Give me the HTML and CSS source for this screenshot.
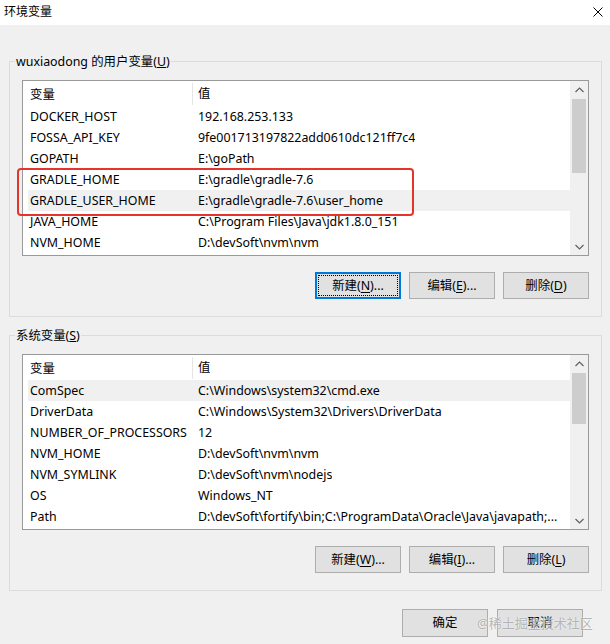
FILE: index.html
```html
<!DOCTYPE html>
<html lang="zh-CN">
<head>
<meta charset="utf-8">
<title>环境变量</title>
<link rel="stylesheet" href="styles.css">
</head>
<body>
<div class="window">
  <div class="titlebar">
    <span class="title">环境变量</span>
    <svg class="close" width="10" height="10" viewBox="0 0 10 10"><path d="M0.5 0.5 L9.5 9.5 M9.5 0.5 L0.5 9.5" stroke="#000" stroke-width="1" fill="none"/></svg>
  </div>
  <div class="content">
    <fieldset class="group">
      <legend>wuxiaodong 的用户变量(<u>U</u>)</legend>
      <div class="group-inner">
        <div class="list">
          <div class="list-main">
            <div class="row head"><span class="c1">变量</span><span class="c2">值</span></div>
            <div class="row"><span class="c1">DOCKER_HOST</span><span class="c2">192.168.253.133</span></div>
            <div class="row"><span class="c1">FOSSA_API_KEY</span><span class="c2">9fe001713197822add0610dc121ff7c4</span></div>
            <div class="row"><span class="c1">GOPATH</span><span class="c2">E:\goPath</span></div>
            <div class="row"><span class="c1">GRADLE_HOME</span><span class="c2">E:\gradle\gradle-7.6</span></div>
            <div class="row hover"><span class="c1">GRADLE_USER_HOME</span><span class="c2">E:\gradle\gradle-7.6\user_home</span></div>
            <div class="row"><span class="c1">JAVA_HOME</span><span class="c2">C:\Program Files\Java\jdk1.8.0_151</span></div>
            <div class="row"><span class="c1">NVM_HOME</span><span class="c2">D:\devSoft\nvm\nvm</span></div>
          </div>
          <div class="scrollbar">
            <div class="arrow"><svg width="9" height="6" viewBox="0 0 9 6"><path d="M0.5 5 L4.5 1 L8.5 5" stroke="#606060" stroke-width="1.2" fill="none"/></svg></div>
            <div class="track"><div class="thumb thumb-user"></div></div>
            <div class="arrow"><svg width="9" height="6" viewBox="0 0 9 6"><path d="M0.5 1 L4.5 5 L8.5 1" stroke="#606060" stroke-width="1.2" fill="none"/></svg></div>
          </div>
          <div class="callout"></div>
        </div>
        <div class="buttons">
          <button class="btn focused">新建(<u>N</u>)...</button>
          <button class="btn">编辑(<u>E</u>)...</button>
          <button class="btn">删除(<u>D</u>)</button>
        </div>
      </div>
    </fieldset>

    <fieldset class="group group-sys">
      <legend>系统变量(<u>S</u>)</legend>
      <div class="group-inner">
        <div class="list">
          <div class="list-main">
            <div class="row head"><span class="c1">变量</span><span class="c2">值</span></div>
            <div class="row hover"><span class="c1">ComSpec</span><span class="c2">C:\Windows\system32\cmd.exe</span></div>
            <div class="row"><span class="c1">DriverData</span><span class="c2">C:\Windows\System32\Drivers\DriverData</span></div>
            <div class="row"><span class="c1">NUMBER_OF_PROCESSORS</span><span class="c2">12</span></div>
            <div class="row"><span class="c1">NVM_HOME</span><span class="c2">D:\devSoft\nvm\nvm</span></div>
            <div class="row"><span class="c1">NVM_SYMLINK</span><span class="c2">D:\devSoft\nvm\nodejs</span></div>
            <div class="row"><span class="c1">OS</span><span class="c2">Windows_NT</span></div>
            <div class="row"><span class="c1">Path</span><span class="c2">D:\devSoft\fortify\bin;C:\ProgramData\Oracle\Java\javapath;...</span></div>
          </div>
          <div class="scrollbar">
            <div class="arrow"><svg width="9" height="6" viewBox="0 0 9 6"><path d="M0.5 5 L4.5 1 L8.5 5" stroke="#606060" stroke-width="1.2" fill="none"/></svg></div>
            <div class="track"><div class="thumb thumb-sys"></div></div>
            <div class="arrow"><svg width="9" height="6" viewBox="0 0 9 6"><path d="M0.5 1 L4.5 5 L8.5 1" stroke="#606060" stroke-width="1.2" fill="none"/></svg></div>
          </div>
        </div>
        <div class="buttons">
          <button class="btn">新建(<u>W</u>)...</button>
          <button class="btn">编辑(<u>I</u>)...</button>
          <button class="btn">删除(<u>L</u>)</button>
        </div>
      </div>
    </fieldset>

    <div class="footer">
      <button class="btn">确定</button>
      <button class="btn">取消</button>
      <span class="watermark">@稀土掘金技术社区</span>
    </div>
  </div>
</div>
</body>
</html>
```

FILE: styles.css
```css
* { box-sizing: border-box; }
html, body { margin: 0; padding: 0; }
body {
  width: 610px;
  height: 644px;
  overflow: hidden;
  background: #f0f0f0;
  font-family: "Noto Sans", "Noto Sans CJK SC", sans-serif;
  font-size: 12.4px;
  color: #000;
}
.window { width: 610px; height: 644px; background: #f0f0f0; }
.titlebar {
  height: 25px;
  background: #fff;
  display: flex;
  align-items: center;
  justify-content: space-between;
  padding: 0 7px 0 4px;
}
.title { font-size: 12px; line-height: 16px; padding-bottom: 2px; }
.close { display: block; margin-bottom: 2px; }

.content { padding: 28px 8px 0 9px; }

.group {
  margin: 0;
  padding: 0;
  border: 1px solid #dcdcdc;
  min-width: 0;
}
.group legend {
  margin-left: 5px;
  padding: 0 1px;
  line-height: 17px;
  font-size: 12.4px;
}
.group-sys { margin-top: 10px; }
.group-inner { padding: 10px 12px 17px 12px; }

.list {
  position: relative;
  height: 176px;
  border: 1px solid #999;
  background: #fff;
  display: flex;
}
.list-main { flex: 1; overflow: hidden; }
.row {
  display: flex;
  height: 21px;
  align-items: center;
  margin-left: 5px;
  white-space: nowrap;
}
.row.head { height: 25px; }
.row.hover { background: #f0f0f0; }
.c1 { width: 164px; padding-left: 2px; flex: none; }
.c2 { padding-left: 6px; overflow: hidden; }
.head .c2 { border-left: 1px solid #e5e5e5; height: 22px; line-height: 22px; padding-left: 5px; }

.scrollbar {
  width: 18px;
  flex: none;
  background: #f0f0f0;
  display: flex;
  flex-direction: column;
}
.arrow { height: 17px; display: flex; align-items: center; justify-content: center; }
.arrow svg { display: block; }
.track { flex: 1; padding: 1px 2px; }
.thumb { background: #cdcdcd; height: 74px; }
.thumb-sys { height: 51px; }

.callout {
  position: absolute;
  left: -6px;
  top: 87px;
  width: 397px;
  height: 48px;
  border: 2.5px solid #e5342b;
  border-radius: 4px;
  pointer-events: none;
}

.buttons {
  display: flex;
  justify-content: flex-end;
  gap: 8px;
  margin-top: 16px;
}
.btn {
  width: 86px;
  height: 27px;
  margin: 0;
  padding: 0;
  background: #e1e1e1;
  border: 1px solid #adadad;
  border-radius: 0;
  font-family: inherit;
  font-size: 12.4px;
  color: #000;
  line-height: 16px;
}
.btn u { text-underline-offset: 2px; }
.btn.focused {
  border: 2px solid #0078d7;
  outline: 1px dotted #000;
  outline-offset: -4px;
}

.footer {
  position: relative;
  display: flex;
  justify-content: flex-end;
  gap: 9px;
  margin-top: 18px;
  padding-right: 19px;
}
.footer .btn { height: 28px; }
.watermark {
  position: absolute;
  left: 468px;
  top: 4px;
  font-size: 13px;
  line-height: 20px;
  color: rgba(160, 160, 160, 0.75);
  text-shadow: 0 0 2px rgba(255,255,255,0.9);
  white-space: nowrap;
}
```
